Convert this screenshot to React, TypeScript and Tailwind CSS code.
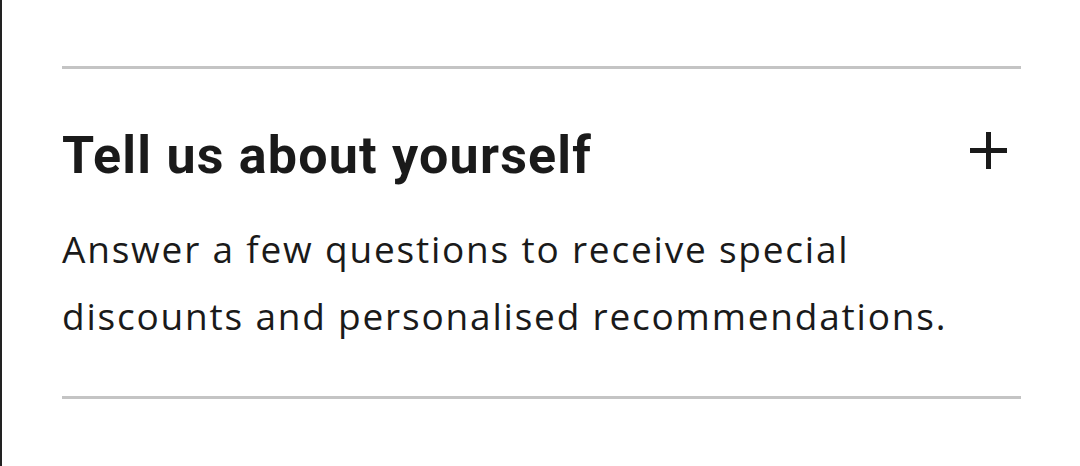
import React from "react";

export default function App() {
  return (
    <div className="h-[466px] w-[1080px] bg-white border-l-2 border-[#222] overflow-hidden">
      <div className="ml-[60px] mr-[59px] pt-[66px]">
        <div className="h-[3px] bg-[#c4c4c4]" />
        <div className="flex items-start justify-between mt-[57px]">
          <h2
            className="text-[52px] leading-[60px] font-bold text-[#1a1a1a] tracking-[1.2px]"
            style={{ fontFamily: "Roboto, 'Noto Sans', sans-serif" }}
          >
            Tell us about yourself
          </h2>
          <svg width="37" height="37" viewBox="0 0 37 37" className="mr-[14px] mt-[6px]">
            <rect x="16" y="0" width="5" height="37" fill="#1a1a1a" />
            <rect x="0" y="16" width="37" height="5" fill="#1a1a1a" />
          </svg>
        </div>
        <p
          className="mt-[29px] text-[37px] leading-[67px] text-[#1a1a1a] font-normal tracking-[1.8px]"
          style={{ fontFamily: "'Open Sans', 'Noto Sans', sans-serif" }}
        >
          Answer a few questions to receive special
          <br />
          discounts and personalised recommendations.
        </p>
        <div className="mt-[47px] h-[3px] bg-[#c4c4c4]" />
      </div>
    </div>
  );
}
